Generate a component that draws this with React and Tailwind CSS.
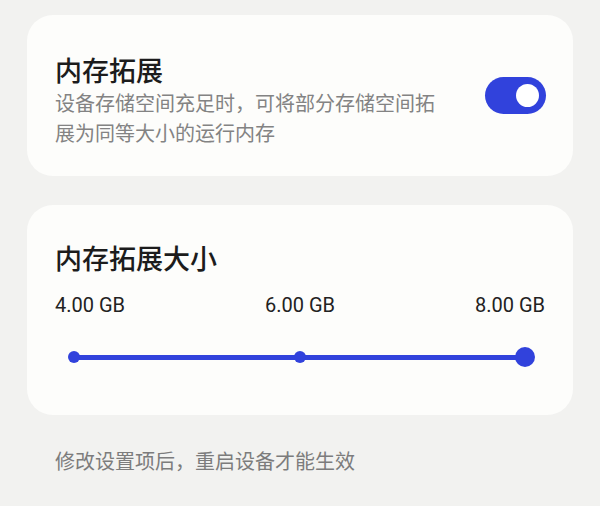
export default function App() {
  const cjk = { fontFamily: '"Noto Sans CJK SC", "Noto Sans", sans-serif' };
  const latin = { fontFamily: 'Roboto, "Noto Sans", sans-serif' };

  return (
    <div
      className="w-[600px] h-[506px] bg-[#f2f2f0] px-[27px] pt-[15px] overflow-hidden"
      style={cjk}
    >
      {/* Memory extension toggle card */}
      <div className="h-[161px] rounded-[26px] bg-[#fdfdfb] pl-[28px] pr-[27px] pt-[37px] flex items-start justify-between">
        <div>
          <div className="text-[27px] leading-[36px] font-medium text-[#1c1c1c]">内存拓展</div>
          <div className="w-[392px] text-[20px] leading-[30px] text-[#838383]">
            设备存储空间充足时，可将部分存储空间拓展为同等大小的运行内存
          </div>
        </div>
        <div className="mt-[25px] w-[61px] h-[37px] rounded-full bg-[#3142dc] flex items-center justify-end pr-[7px]">
          <div className="w-[23px] h-[23px] rounded-full bg-white" />
        </div>
      </div>

      {/* Extension size slider card */}
      <div className="mt-[29px] h-[210px] rounded-[26px] bg-[#fdfdfb] px-[28px] pt-[35px]">
        <div className="text-[27px] leading-[36px] font-medium text-[#1c1c1c]">内存拓展大小</div>
        <div
          className="mt-[16px] flex justify-between text-[20px] leading-[26px] text-[#222]"
          style={latin}
        >
          <span>4.00 GB</span>
          <span>6.00 GB</span>
          <span>8.00 GB</span>
        </div>
        <div className="mt-[29px] ml-[19px] mr-[20px] h-[20px] relative flex items-center">
          <div className="w-full h-[5px] bg-[#3142dc] rounded-full" />
          <div className="absolute left-0 top-1/2 -translate-x-1/2 -translate-y-1/2 w-[12px] h-[12px] rounded-full bg-[#3142dc]" />
          <div className="absolute left-1/2 top-1/2 -translate-x-1/2 -translate-y-1/2 w-[12px] h-[12px] rounded-full bg-[#3142dc]" />
          <div className="absolute left-full top-1/2 -translate-x-1/2 -translate-y-1/2 w-[20px] h-[20px] rounded-full bg-[#3142dc]" />
        </div>
      </div>

      <div className="mt-[32px] pl-[28px] text-[20px] leading-[28px] text-[#7c7c7c]">
        修改设置项后，重启设备才能生效
      </div>
    </div>
  );
}
